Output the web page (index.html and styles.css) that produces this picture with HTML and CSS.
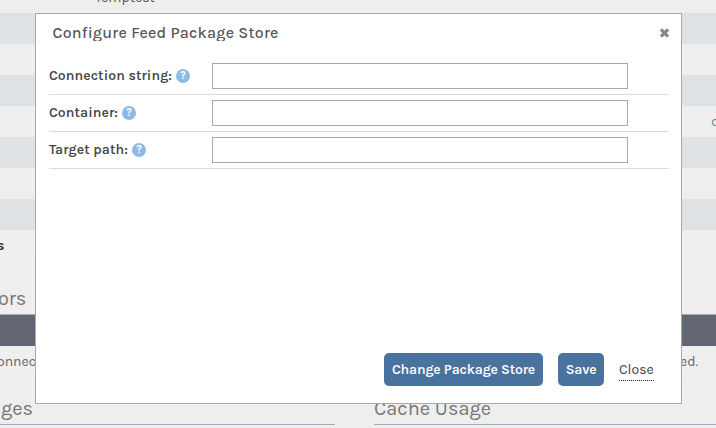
FILE: index.html
```html
<!DOCTYPE html>
<html lang="en">
<head>
<meta charset="utf-8">
<title>Configure Feed Package Store</title>
<link rel="stylesheet" href="styles.css">
</head>
<body>
<main class="page">
  <div class="row row-first"><span class="cell-name">Temptest</span></div>
  <div class="row stripe"></div>
  <div class="row"></div>
  <div class="row stripe"></div>
  <div class="row"><span class="cell-link">d</span></div>
  <div class="row stripe"></div>
  <div class="row"></div>
  <div class="row stripe"></div>
  <div class="row alt"><b class="cell-label">s</b></div>
  <h2 class="section-title">ors</h2>
  <div class="table-head"></div>
  <div class="row alt connectors"><span>onnec</span><span>ed.</span></div>
  <div class="columns">
    <h2 class="column-title">ges</h2>
    <h2 class="column-title">Cache Usage</h2>
  </div>
</main>
<section class="dialog" role="dialog">
  <header class="dialog-head">
    <h1 class="dialog-title">Configure Feed Package Store</h1>
    <svg class="dismiss" viewBox="0 0 9 9"><path d="M1.3 1.3 7.7 7.7M7.7 1.3 1.3 7.7"/></svg>
  </header>
  <div class="field"><label class="label" for="a"><span>Connection string:</span><i class="help">?</i></label><input id="a" type="text"></div>
  <div class="field"><label class="label" for="b"><span>Container:</span><i class="help">?</i></label><input id="b" type="text"></div>
  <div class="field"><label class="label" for="c"><span>Target path:</span><i class="help">?</i></label><input id="c" type="text"></div>
  <footer class="actions">
    <button class="button change">Change Package Store</button>
    <button class="button save">Save</button>
    <a class="close">Close</a>
  </footer>
</section>
</body>
</html>
```
FILE: styles.css
```css
* { box-sizing: border-box; }
body { margin: 0; width: 716px; height: 428px; overflow: hidden; background: #eee; color: #555; font: 14px/18px Karla, Roboto, sans-serif; }
h1, h2 { margin: 0; font-weight: 400; }
.page { height: 428px; overflow: hidden; }
.row { height: 31px; display: flex; align-items: center; }
.row-first { height: 13px; align-items: flex-end; }
.stripe { background: #dee2e5; }
.alt { background: #efefef; }
.cell-name { margin: 0 0 6px 95px; letter-spacing: .05px; }
.cell-link { margin-left: 711px; color: #6c7fae; }
.cell-label { margin-left: -3px; color: #333; }
.section-title { height: 54px; padding-top: 26px; border-bottom: 1px solid #9eabb8; font-size: 20px; line-height: 24px; letter-spacing: -.2px; color: #777; text-indent: -2px; }
.table-head { height: 31px; background: #626672; }
.connectors { justify-content: space-between; padding-right: 18px; color: #666; text-indent: -3px; }
.connectors span:last-child { text-indent: 0; }
.columns { height: 48px; display: grid; grid-template-columns: 335px 342px; gap: 39px; }
.column-title { height: 48px; padding-top: 20px; border-bottom: 1px solid #9eabb8; font-size: 20px; line-height: 24px; letter-spacing: .02px; color: #777; }
.column-title:first-child { text-indent: 1px; }
.dialog { position: absolute; left: 35px; top: 13px; width: 647px; height: 391px; padding: 10px 12px 17px 13px; display: flex; flex-direction: column; background: #fff; border: 1px solid #a9a9a9; }
.dialog-head { height: 34px; padding: 0 0 0 3.5px; display: flex; justify-content: space-between; }
.dialog-title { height: 17px; overflow: hidden; font-size: 16px; line-height: 18px; font-weight: 500; letter-spacing: .22px; color: #555; }
.dismiss { width: 11px; height: 10px; margin: 4px -1px 0 0; fill: none; stroke: #888; stroke-width: 3; }
.field { height: 37px; display: flex; align-items: center; border-bottom: 1px solid #dcdcdc; }
.label { width: 163px; display: flex; align-items: center; gap: 4px; font-weight: 600; letter-spacing: .08px; color: #444; }
.help { width: 14px; height: 14px; border-radius: 50%; background: #8dbbe7; color: #fff; font: 700 11px/14px Roboto, sans-serif; letter-spacing: 0; text-align: center; }
.field input { width: 416px; height: 26px; border: 1px solid #a9a9a9; background: #fff; }
.actions { margin-top: auto; padding-right: 15px; display: flex; justify-content: flex-end; }
.button { height: 33px; padding: 0; border: 0; border-radius: 5px; background: #4a729f; color: #fff; font: 600 14px/18px Karla, Roboto, sans-serif; letter-spacing: -.17px; }
.change { width: 159px; margin-right: 15px; }
.save { width: 46px; margin-right: 15px; }
.close { height: 21px; margin-top: 7px; width: 35px; padding-top: 1px; border-bottom: 1px dotted #223; color: #444; white-space: nowrap; }
```
